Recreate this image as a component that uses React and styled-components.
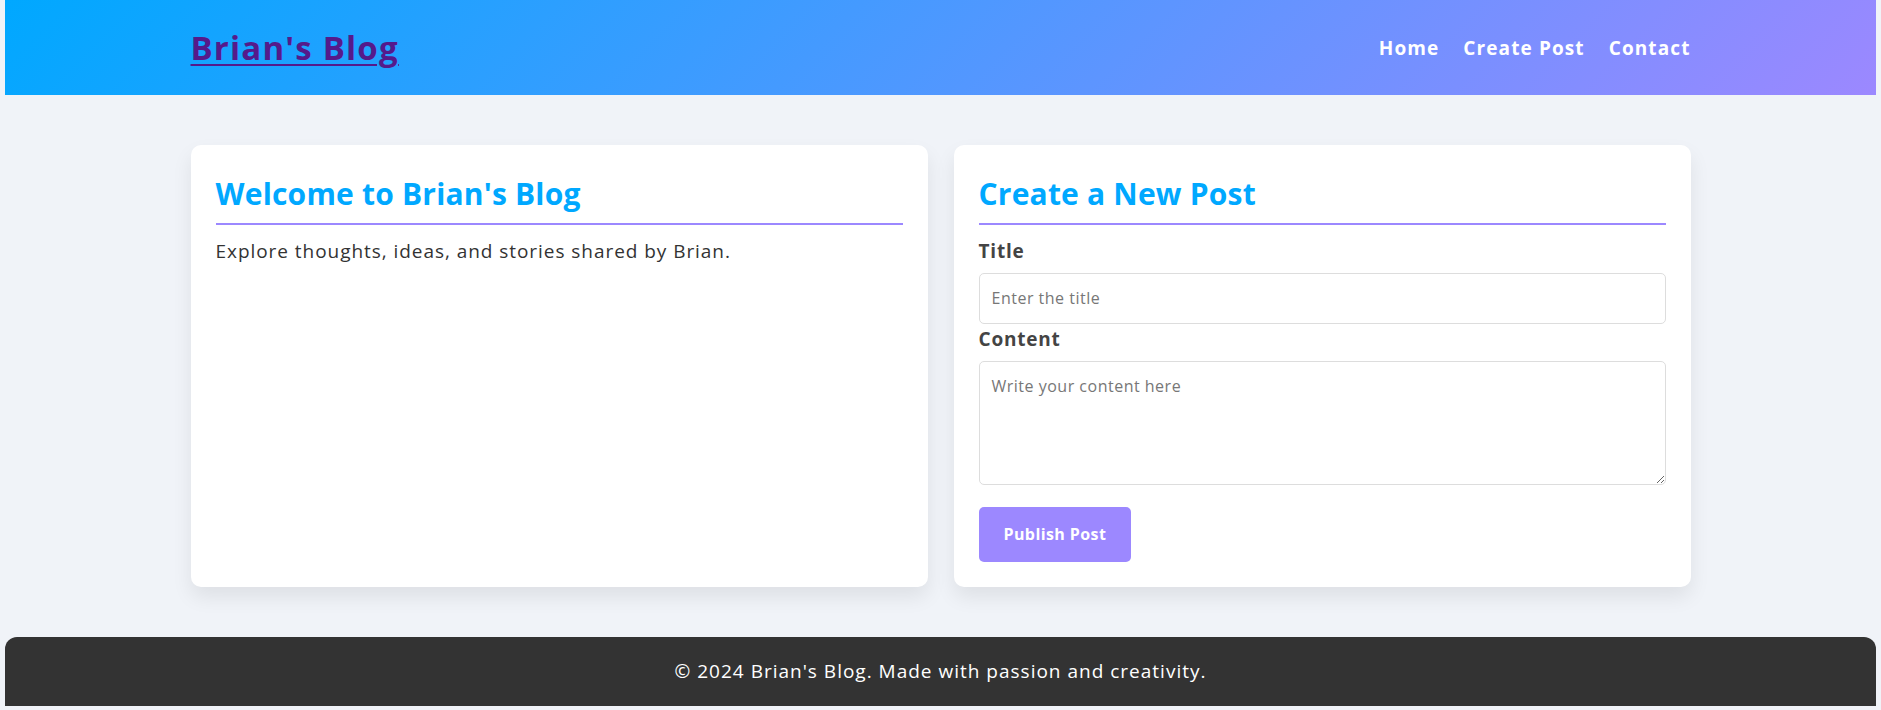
import React from "react";
import styled, { createGlobalStyle } from "styled-components";

const GlobalStyle = createGlobalStyle`
  html, body {
    margin: 0;
    background: #f0f3f8;
  }
  body {
    padding: 0 5px 4px;
    font-family: "Open Sans", "DejaVu Sans", sans-serif;
    color: #333;
  }
  * {
    box-sizing: border-box;
  }
`;

const Header = styled.header`
  height: 95px;
  background: linear-gradient(135deg, #00a8ff 0%, #9c88ff 100%);
  display: flex;
  align-items: center;
`;

const Container = styled.div`
  width: 1500px;
  margin: 0 auto;
`;

const HeaderInner = styled(Container)`
  display: flex;
  justify-content: space-between;
  align-items: center;
`;

const Logo = styled.a`
  font-size: 33px;
  font-weight: 700;
  letter-spacing: 1.2px;
  color: #551a8b;
  text-decoration: underline;
  text-decoration-thickness: 2px;
  text-underline-offset: 4px;
`;

const Nav = styled.nav`
  display: flex;
  gap: 24px;
  a {
    color: #fff;
    text-decoration: none;
    font-size: 19px;
    font-weight: 700;
    letter-spacing: 1.1px;
  }
`;

const Main = styled(Container)`
  display: grid;
  grid-template-columns: 1fr 1fr;
  gap: 26px;
  padding: 50px 0 50px;
`;

const Card = styled.section`
  background: #fff;
  border-radius: 10px;
  padding: 25px;
  box-shadow: 0 10px 20px rgba(0, 0, 0, 0.08);
`;

const CardTitle = styled.h2`
  margin: 0 0 12px;
  padding-bottom: 5px;
  border-bottom: 2px solid #9c88ff;
  color: #00a8ff;
  font-size: 30px;
  font-weight: 700;
  letter-spacing: 0.2px;
  line-height: 48px;
`;

const Text = styled.p`
  margin: 0;
  font-size: 19px;
  letter-spacing: 0.95px;
  line-height: 28.8px;
  color: #333;
`;

const Label = styled.label`
  display: block;
  margin-bottom: 7px;
  font-size: 19px;
  font-weight: 700;
  letter-spacing: 0.8px;
  line-height: 28.8px;
  color: #444;
`;

const fieldStyle = `
  display: block;
  width: 100%;
  border: 1px solid #ddd;
  border-radius: 5px;
  padding: 12px;
  font-family: "Open Sans", "DejaVu Sans", sans-serif;
  font-size: 16px;
  letter-spacing: 0.5px;
  line-height: 25.6px;
  color: #333;
  background: #fff;
  &::placeholder {
    color: #777;
  }
`;

const Input = styled.input`
  ${fieldStyle}
  height: 51px;
  margin-bottom: 1px;
`;

const TextArea = styled.textarea`
  ${fieldStyle}
  height: 124px;
  margin-bottom: 22px;
  resize: vertical;
`;

const Button = styled.button`
  border: none;
  border-radius: 5px;
  background: #9c88ff;
  color: #fff;
  padding: 15px 25px;
  font-family: "Open Sans", "DejaVu Sans", sans-serif;
  font-size: 16px;
  font-weight: 700;
  letter-spacing: 0.4px;
  line-height: 25px;
  cursor: pointer;
`;

const Footer = styled.footer`
  height: 69px;
  background: #333;
  color: #fff;
  border-radius: 12px 12px 0 0;
  display: flex;
  align-items: center;
  justify-content: center;
  font-size: 19px;
  letter-spacing: 1px;
`;

export default function App() {
  return (
    <>
      <GlobalStyle />
      <Header>
        <HeaderInner>
          <Logo href="#">Brian's Blog</Logo>
          <Nav>
            <a href="#">Home</a>
            <a href="#">Create Post</a>
            <a href="#">Contact</a>
          </Nav>
        </HeaderInner>
      </Header>
      <Main>
        <Card>
          <CardTitle>Welcome to Brian's Blog</CardTitle>
          <Text>Explore thoughts, ideas, and stories shared by Brian.</Text>
        </Card>
        <Card>
          <CardTitle>Create a New Post</CardTitle>
          <form onSubmit={(e) => e.preventDefault()}>
            <Label htmlFor="title">Title</Label>
            <Input id="title" placeholder="Enter the title" />
            <Label htmlFor="content">Content</Label>
            <TextArea id="content" placeholder="Write your content here" />
            <Button type="submit">Publish Post</Button>
          </form>
        </Card>
      </Main>
      <Footer>© 2024 Brian's Blog. Made with passion and creativity.</Footer>
    </>
  );
}
